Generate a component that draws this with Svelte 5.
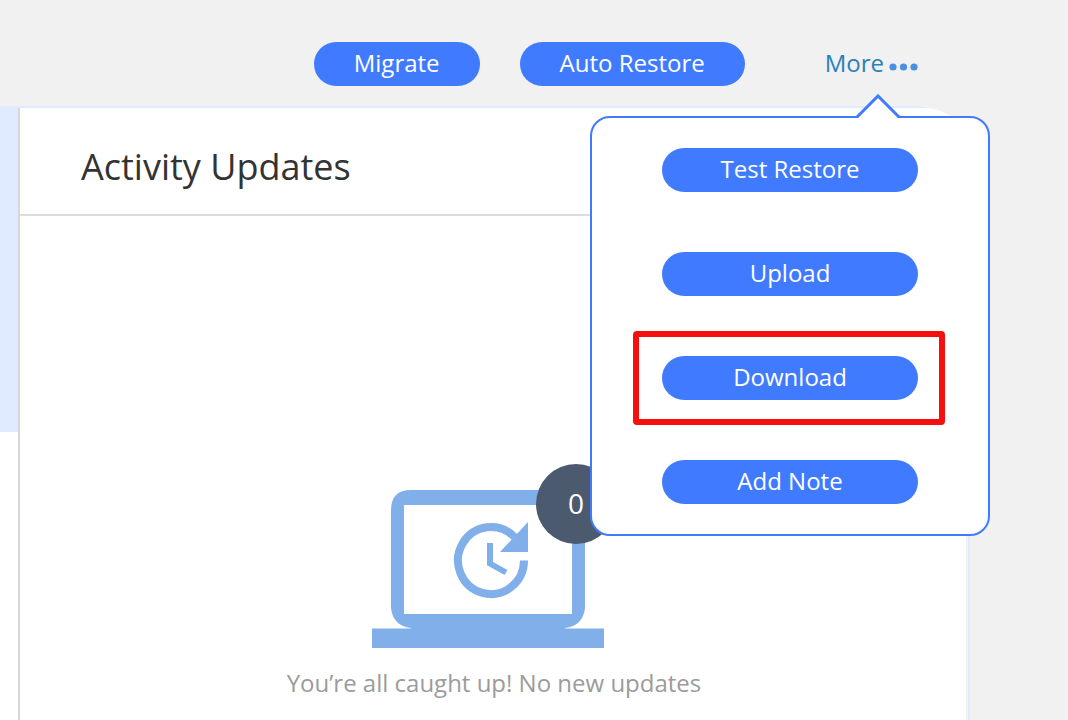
<script>
    const actions = ["Migrate", "Auto Restore"];
    const menuItems = ["Test Restore", "Upload", "Download", "Add Note"];

    let open = $state(true);
    let highlighted = $state("Download");
    let updates = $state(0);

    function toggleMenu(){
        open = !open;
    }
</script>

<div class="page">
    <header class="toolbar">
        <div class="actions">
            {#each actions as action}
                <button class="pill">{action}</button>
            {/each}
        </div>

        <div class="more">
            <button class="more-toggle" aria-expanded={open} onclick={toggleMenu}>
                More
                <svg class="dots" viewBox="0 0 30 8" aria-hidden="true">
                    <circle cx="4" cy="4" r="3.6" />
                    <circle cx="14.5" cy="4" r="3.6" />
                    <circle cx="25" cy="4" r="3.6" />
                </svg>
            </button>

            {#if open}
                <div class="menu">
                    <svg class="arrow" viewBox="0 0 44 24" aria-hidden="true">
                        <path class="arrow-fill" d="M1 24 22 3 43 24Z" />
                        <path class="arrow-line" d="M0 23H1L22 2 43 23H44" />
                    </svg>
                    <ul>
                        {#each menuItems as item}
                            <li class:highlighted={item === highlighted}>
                                <button class="pill">{item}</button>
                            </li>
                        {/each}
                    </ul>
                </div>
            {/if}
        </div>
    </header>

    <main class="panel">
        <div class="side"><div class="side-fill"></div></div>
        <section class="activity">
            <h1>Activity Updates</h1>
            <div class="empty">
                <div class="art">
                    <svg viewBox="0 0 244 184" aria-hidden="true">
                        <path fill-rule="evenodd" d="M39 26H193Q213 26 213 46V144Q211 162 193 164H39Q21 162 19 144V46Q19 26 39 26ZM32 41V150H200V41Z" />
                        <rect y="164.500" width="232" height="19.500" />
                        <rect x="39" y="163" width="154" height="3" />
                        <path class="ring" d="M152 96.5A33 33.5 0 1 1 142.5 73" />
                        <path d="M156 58V88H128Z" />
                        <path class="hands" d="M118 79V99.500L134 108.500" />
                    </svg>
                    <span class="badge">{updates}</span>
                </div>
                <p>You’re all caught up! No new updates</p>
            </div>
        </section>
    </main>
</div>

<style>
    :global(body){
        margin: 0;
        background-color: #f1f1f1;
    }

    .page{
        min-height: 100vh;
        display: flex;
        flex-direction: column;
        overflow: hidden;
        box-sizing: border-box;
        font-family: "Open Sans", "Noto Sans", sans-serif;
        font-size: 24px;
    }

    button{
        border: 0;
        font: inherit;
        cursor: pointer;
    }

    .toolbar{
        display: flex;
        justify-content: flex-end;
        gap: 80px;
        padding: 42px 149px 20px 20px;
    }

    .actions{
        display: flex;
        gap: 40px;
    }

    .pill{
        height: 44px;
        padding: 0 40px 2px;
        border-radius: 22px;
        line-height: 42px;
        color: white;
        background-color: #407bff;
        white-space: nowrap;
    }
    .pill:hover{ background-color: #2f6af0; }

    .more{ position: relative; }

    .more-toggle{
        display: flex;
        align-items: center;
        gap: 5px;
        height: 44px;
        padding: 0 0 2px;
        line-height: 42px;
        color: #2980b9;
        background: none;
    }

    .dots{
        width: 30px;
        height: 8px;
        margin-top: 8px;
        fill: #4a90e2;
    }

    /* drops down below the More toggle */
    .menu{
        position: absolute;
        z-index: 2;
        top: 74px;
        right: -71px;
        width: 400px;
        box-sizing: border-box;
        padding: 30px 70px;
        border: 2px solid #407bff;
        border-radius: 20px;
        background-color: white;
    }

    .arrow{
        position: absolute;
        top: -24px;
        right: 88px;
        width: 44px;
        height: 24px;
    }
    .arrow-fill{ fill: white; }
    .arrow-line{
        fill: none;
        stroke: #407bff;
        stroke-width: 3;
    }

    ul{
        display: flex;
        flex-direction: column;
        gap: 60px;
        margin: 0;
        padding: 0;
        list-style: none;
    }

    li{
        display: flex;
        position: relative;
    }
    li .pill{ flex: 1; }

    .highlighted::after{
        content: "";
        position: absolute;
        inset: -25px -27px -25px -29px;
        border: 6px solid #f50f0f;
        border-radius: 4px;
        pointer-events: none;
    }

    .panel{
        flex: 1;
        display: flex;
        margin-right: 98px;
        padding-right: 2px;
        border-top: 2px solid #e0ebff;
        border-right: 2px solid #e0ebff;
        border-top-right-radius: 56px;
    }

    .side{
        width: 18px;
        background-color: white;
    }
    .side-fill{
        height: 324px;
        background-color: #e0ebff;
    }

    .activity{
        flex: 1;
        border-left: 2px solid #d8d8d8;
        border-top-right-radius: 40px;
        background-color: white;
    }

    h1{
        margin: 0;
        padding: 35px 61px 23px;
        border-bottom: 2px solid #dcdcdc;
        font-size: 36px;
        font-weight: 400;
        line-height: 48px;
        color: #333333;
    }

    .empty{
        display: flex;
        flex-direction: column;
        align-items: center;
        gap: 20px;
        padding: 248px 20px 20px 22px;
    }

    .art{
        position: relative;
        width: 244px;
        height: 184px;
    }
    .art svg{
        display: block;
        fill: #80afea;
    }
    .art .ring, .art .hands{
        fill: none;
        stroke: #80afea;
        stroke-width: 8;
    }
    .art .hands{ stroke-width: 6; }

    .badge{
        position: absolute;
        top: 0;
        right: 0;
        width: 80px;
        height: 80px;
        border-radius: 50%;
        line-height: 78px;
        text-align: center;
        font-size: 28px;
        color: white;
        background-color: #4c5a70;
    }

    .empty p{
        margin: 0;
        line-height: 30px;
        color: #9b9b9b;
    }
</style>
